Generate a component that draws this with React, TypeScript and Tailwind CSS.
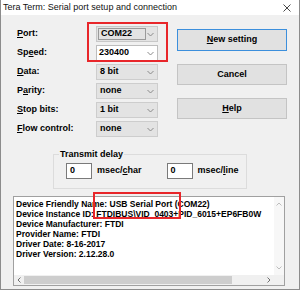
const Chevron = () => (
  <svg width="7" height="5" viewBox="0 0 7 5" className="shrink-0">
    <path d="M0.5 1 L3.5 4 L6.5 1" fill="none" stroke="#8a8a8a" strokeWidth="1" />
  </svg>
);

function Combo({ value, kind }: { value: string; kind?: "focus" | "edit" }) {
  if (kind === "focus") {
    return (
      <div className="h-[16px] w-[62px] border border-[#c8c8c8] bg-[#e3e3e3] flex items-center pr-[3px]">
        <div className="h-[12px] w-[48px] ml-[1px] border border-[#9a9a9a] flex items-center pl-[2px] font-bold">
          {value}
        </div>
        <div className="flex-1" />
        <Chevron />
      </div>
    );
  }
  return (
    <div
      className={
        kind === "edit"
          ? "h-[16px] w-[62px] border border-[#bdbdbd] bg-white flex items-center pl-[2px] pr-[3px] font-bold"
          : "h-[16px] w-[62px] border border-[#cdcdcd] bg-[#e3e3e3] flex items-center pl-[3px] pr-[3px] font-bold"
      }
    >
      <span className="flex-1">{value}</span>
      <Chevron />
    </div>
  );
}

function Label({ pre, u, post }: { pre: string; u: string; post: string }) {
  return (
    <div className="h-[16px] flex items-center font-bold">
      {pre}
      <span className="underline underline-offset-1">{u}</span>
      {post}
    </div>
  );
}

function Button({ children, main }: { children: React.ReactNode; main?: boolean }) {
  return (
    <div
      className={
        main
          ? "h-[22px] w-[110px] border border-[#3c8fdc] bg-[#e1e1e1] flex items-center justify-center font-bold"
          : "h-[21px] w-[110px] border border-[#c4c4c4] bg-[#e1e1e1] flex items-center justify-center font-bold"
      }
    >
      {children}
    </div>
  );
}

const lines = [
  "Device Friendly Name: USB Serial Port (COM22)",
  "Device Instance ID: FTDIBUS\\VID_0403+PID_6015+EP6FB0W",
  "Device Manufacturer: FTDI",
  "Provider Name: FTDI",
  "Driver Date: 8-16-2017",
  "Driver Version: 2.12.28.0",
];

export default function App() {
  return (
    <div className="relative w-[300px] h-[290px] bg-[#f0f0f0] border-x border-b border-[#8c8c8c] flex flex-col font-['Liberation_Sans',Arial,sans-serif] text-[9px] text-black overflow-hidden">
      {/* title bar */}
      <div className="h-[15px] bg-white flex items-center justify-between pl-[2px] pr-[8px] shrink-0">
        <span className="text-[9px] text-[#111]">Tera Term: Serial port setup and connection</span>
        <svg width="8" height="8" viewBox="0 0 8 8">
          <path d="M0.5 0.5 L7.5 7.5 M7.5 0.5 L0.5 7.5" stroke="#333" strokeWidth="0.9" />
        </svg>
      </div>

      {/* settings + buttons */}
      <div className="flex mt-[11px]">
        <div className="ml-[16px] grid grid-cols-[79px_62px] gap-y-[3px]">
          <Label pre="" u="P" post="ort:" />
          <Combo value="COM22" kind="focus" />
          <Label pre="Sp" u="e" post="ed:" />
          <Combo value="230400" kind="edit" />
          <Label pre="" u="D" post="ata:" />
          <Combo value="8 bit" />
          <Label pre="P" u="a" post="rity:" />
          <Combo value="none" />
          <Label pre="" u="S" post="top bits:" />
          <Combo value="1 bit" />
          <Label pre="" u="F" post="low control:" />
          <Combo value="none" />
        </div>
        <div className="ml-[19px] mt-[3px] flex flex-col gap-[13px]">
          <Button main>
            <span className="underline underline-offset-1">N</span>ew setting
          </Button>
          <Button>Cancel</Button>
          <Button>
            <span className="underline underline-offset-1">H</span>elp
          </Button>
        </div>
      </div>

      {/* transmit delay group */}
      <fieldset className="ml-[52px] mt-[12px] w-[194px] h-[40px] border border-[#dcdcdc]">
        <legend className="ml-[5px] px-[1px] leading-[11px] font-bold">Transmit delay</legend>
        <div className="mt-[3px] ml-[12px] flex items-center">
          <div className="h-[16px] w-[26px] border border-[#7a7a7a] bg-white flex items-center pl-[3px] font-bold">0</div>
          <span className="ml-[5px] font-bold">
            msec/<span className="underline underline-offset-1">c</span>har
          </span>
          <div className="ml-[25px] h-[16px] w-[26px] border border-[#7a7a7a] bg-white flex items-center pl-[3px] font-bold">0</div>
          <span className="ml-[5px] font-bold">
            msec/<span className="underline underline-offset-1">l</span>ine
          </span>
        </div>
      </fieldset>

      {/* device info list */}
      <div className="ml-[12px] mt-[7px] w-[272px] h-[90px] border border-[#a0a0a0] bg-white flex flex-col">
        <div className="flex flex-1 min-h-0">
          <div className="flex-1 min-w-0 overflow-hidden pl-[2px] pt-[2px] leading-[10px] text-[8.5px] font-bold whitespace-nowrap">
            {lines.map((l) => (
              <div key={l}>{l}</div>
            ))}
          </div>
          <div className="w-[10px] bg-[#f7f7f7] flex flex-col items-center justify-between py-[5px]">
            <svg width="6" height="4" viewBox="0 0 6 4">
              <path d="M0.5 3.5 L3 1 L5.5 3.5" fill="none" stroke="#b5b5b5" strokeWidth="0.9" />
            </svg>
            <svg width="6" height="4" viewBox="0 0 6 4">
              <path d="M0.5 0.5 L3 3 L5.5 0.5" fill="none" stroke="#b5b5b5" strokeWidth="0.9" />
            </svg>
          </div>
        </div>
        <div className="h-[10px] flex">
          <div className="flex-1 bg-[#f0f0f0] flex items-center">
            <div className="w-[10px] flex justify-center">
              <svg width="4" height="6" viewBox="0 0 4 6">
                <path d="M3.5 0.5 L1 3 L3.5 5.5" fill="none" stroke="#606060" strokeWidth="0.9" />
              </svg>
            </div>
            <div className="w-[208px] h-[8px] bg-[#cdcdcd]" />
            <div className="flex-1" />
            <div className="w-[10px] flex justify-center">
              <svg width="4" height="6" viewBox="0 0 4 6">
                <path d="M0.5 0.5 L3 3 L0.5 5.5" fill="none" stroke="#606060" strokeWidth="0.9" />
              </svg>
            </div>
          </div>
          <div className="w-[10px] bg-[#f0f0f0]" />
        </div>
      </div>

      {/* red annotation boxes */}
      <div className="absolute left-[86px] top-[22px] w-[81px] h-[40px] border-2 border-[#e8262a]" />
      <div className="absolute left-[92px] top-[192px] w-[88px] h-[27px] border-2 border-[#e8262a]" />
    </div>
  );
}
